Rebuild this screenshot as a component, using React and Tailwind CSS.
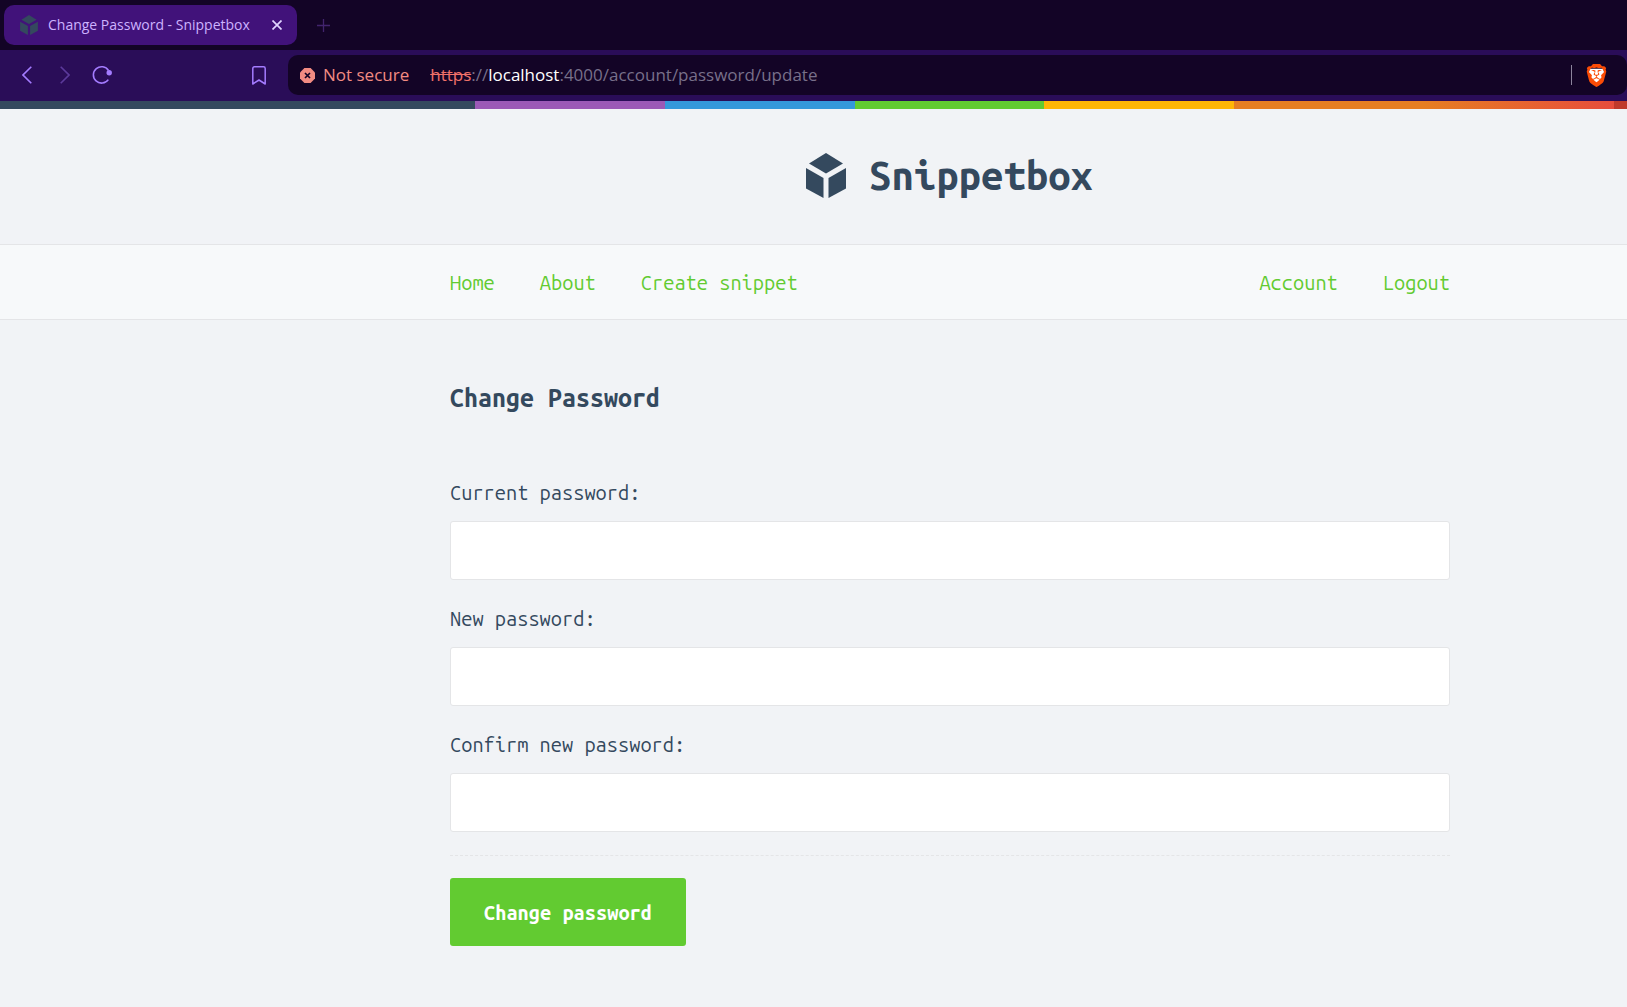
import React from "react";
import { SiBrave } from "react-icons/si";

function Cube({ className }) {
  return (
    <svg viewBox="0 0 40 45" className={className} fill="currentColor" aria-hidden="true">
      <path d="M20 0 37 10.5 20 20.5 3 10.5Z" />
      <path d="M0 15 17.5 25V45L0 35.5Z" />
      <path d="M40 15 22.5 25V45L40 35.5Z" />
    </svg>
  );
}

function TabStrip() {
  return (
    <div className="flex h-[50px] items-center bg-[#130426] pl-1">
      <div className="flex h-10 w-[293px] items-center rounded-[10px] bg-[#41127a] pl-4 pr-2 text-[#cdb3ff]">
        <Cube className="h-5 w-[18px] text-[#34495e]" />
        <span className="ml-[10px] flex-1 whitespace-nowrap pb-px text-[14px]">Change Password - Snippetbox</span>
        <button type="button" aria-label="Close tab" className="grid size-6 place-items-center text-[#e0d4ff]">
          <svg viewBox="0 0 10 10" className="size-[10px]" stroke="currentColor" strokeWidth="1.7">
            <path d="M.5.5 9.5 9.5M9.5.5.5 9.5" />
          </svg>
        </button>
      </div>
      <button type="button" aria-label="New tab" className="ml-[14px] grid size-6 place-items-center text-[#42246e]">
        <svg viewBox="0 0 13 13" className="size-[13px]" stroke="currentColor" strokeWidth="1.3">
          <path d="M6.5 0V13M0 6.5H13" />
        </svg>
      </button>
    </div>
  );
}

function Toolbar() {
  return (
    <div className="flex h-[51px] items-center bg-[#2a0d58] pb-px text-[#a47cff]">
      <button type="button" aria-label="Back" className="ml-[15px] grid size-6 place-items-center">
        <svg viewBox="0 0 10 18" className="h-[18px] w-[10px]" fill="none" stroke="currentColor" strokeWidth="1.6">
          <path d="M9.3.7 1 9l8.300 8.300" />
        </svg>
      </button>
      <button type="button" aria-label="Forward" className="ml-[14px] grid size-6 place-items-center text-[#5c3a9c]">
        <svg viewBox="0 0 10 18" className="h-[18px] w-[10px]" fill="none" stroke="currentColor" strokeWidth="1.6">
          <path d="M.7.7 9 9 .7 17.300" />
        </svg>
      </button>
      <button type="button" aria-label="Reload" className="ml-[13px] grid size-6 place-items-center">
        <svg viewBox="0 0 20 20" className="size-5" fill="none" stroke="currentColor" strokeWidth="1.6">
          <path d="M16.300 14.600A8.200 8.200 0 1 1 16.500 5.500" />
          <circle cx="17.200" cy="7.700" r="2.700" fill="currentColor" stroke="none" />
        </svg>
      </button>
      <button type="button" aria-label="Bookmark this page" className="ml-[133px] grid size-6 place-items-center">
        <svg viewBox="0 0 14 19" className="h-[19px] w-[14px]" fill="none" stroke="currentColor" strokeWidth="1.5" strokeLinejoin="round">
          <path d="M2.500.8H11.500Q13.200.8 13.200 2.500V18L7 14 .8 18V2.500Q.8.8 2.500.8Z" />
        </svg>
      </button>
      <div className="ml-[17px] flex h-10 flex-1 items-center whitespace-nowrap rounded-[10px] bg-[#130426] pl-3 pr-[22px]">
        <svg viewBox="0 0 15 15" className="size-[15px]" aria-hidden="true">
          <path d="M4.400 0H10.600L15 4.400V10.600L10.600 15H4.400L0 10.600V4.400Z" fill="#f28b82" />
          <path d="M5 5 10 10M10 5 5 10" stroke="#130426" strokeWidth="1.700" />
        </svg>
        <span className="ml-2 text-[17px] text-[#f28b82]">Not secure</span>
        <span className="ml-[21px] flex-1 text-[17px] text-[#78708a]">
          <s className="text-[#f0716a]">https</s>://<span className="text-white">localhost</span>:4000/account/password/update
        </span>
        <span className="h-5 w-px bg-[#8c849c]" />
        <button type="button" aria-label="Brave Shields" className="ml-[13px] grid w-5 place-items-center">
          <svg viewBox="0 0 24 24" className="col-start-1 row-start-1 size-[23px]" aria-hidden="true">
            <path d="M5 5H19L20 9 17 16 12 20 7 16 4 9Z" fill="#fff" />
          </svg>
          <SiBrave className="col-start-1 row-start-1 size-[23px] text-[#fb4c06]" />
        </button>
      </div>
    </div>
  );
}

function NavLink({ children }) {
  return <a href="#" className="text-[#62cb31]">{children}</a>;
}

function Field({ id, label }) {
  return (
    <div className="mb-[23px]">
      <label htmlFor={id} className="mb-3 block leading-8">{label}</label>
      <input id={id} type="password" className="block h-[59px] w-full rounded-[3px] border border-[#e4e5e7] bg-white px-4 outline-none" />
    </div>
  );
}

export default function App() {
  return (
    <div className="min-h-screen bg-[#f1f3f6]">
      <div className="font-['Segoe_UI','Open_Sans',sans-serif]">
        <TabStrip />
        <Toolbar />
      </div>
      <div className="font-['Ubuntu_Mono','DejaVu_Sans_Mono',monospace] text-[20px] text-[#34495e]">
        <div className="h-2 bg-[linear-gradient(to_right,#34495e_475px,#9b59b6_475px,#9b59b6_665px,#3498db_665px,#3498db_855px,#62cb31_855px,#62cb31_1044px,#ffb606_1044px,#ffb606_1234px,#e67e22_1234px,#e67e22_1424px,#e74c3c_1614px,#c0392b_1614px)]" />
        <header className="flex h-[135px] items-center justify-center pb-0.5 pl-[449px] pr-[177px]">
          <h1 className="text-[40px] font-bold leading-none">
            <a href="#" className="flex items-center gap-[23px]">
              <Cube className="h-[45px] w-10" />
              Snippetbox
            </a>
          </h1>
        </header>
        <nav className="flex h-[76px] items-center justify-between border-y border-[#e4e5e7] bg-[#f7f9fa] pl-[450px] pr-[177px] pt-0.5">
          <div className="flex gap-[45px]">
            <NavLink>Home</NavLink>
            <NavLink>About</NavLink>
            <NavLink>Create snippet</NavLink>
          </div>
          <div className="flex gap-[45px]">
            <NavLink>Account</NavLink>
            <NavLink>Logout</NavLink>
          </div>
        </nav>
        <main className="pb-14 pl-[450px] pr-[177px] pt-[63px]">
          <h2 className="mb-[64px] text-[25px] font-bold leading-[30px]">Change Password</h2>
          <form>
            <Field id="current" label="Current password:" />
            <Field id="new" label="New password:" />
            <Field id="confirm" label="Confirm new password:" />
            <div className="border-t border-dashed border-[#e4e5e7] pt-[22px]">
              <button type="button" className="h-[68px] rounded-[3px] bg-[#62cb31] px-[34px] pt-0.5 font-bold text-white">
                Change password
              </button>
            </div>
          </form>
        </main>
      </div>
    </div>
  );
}
